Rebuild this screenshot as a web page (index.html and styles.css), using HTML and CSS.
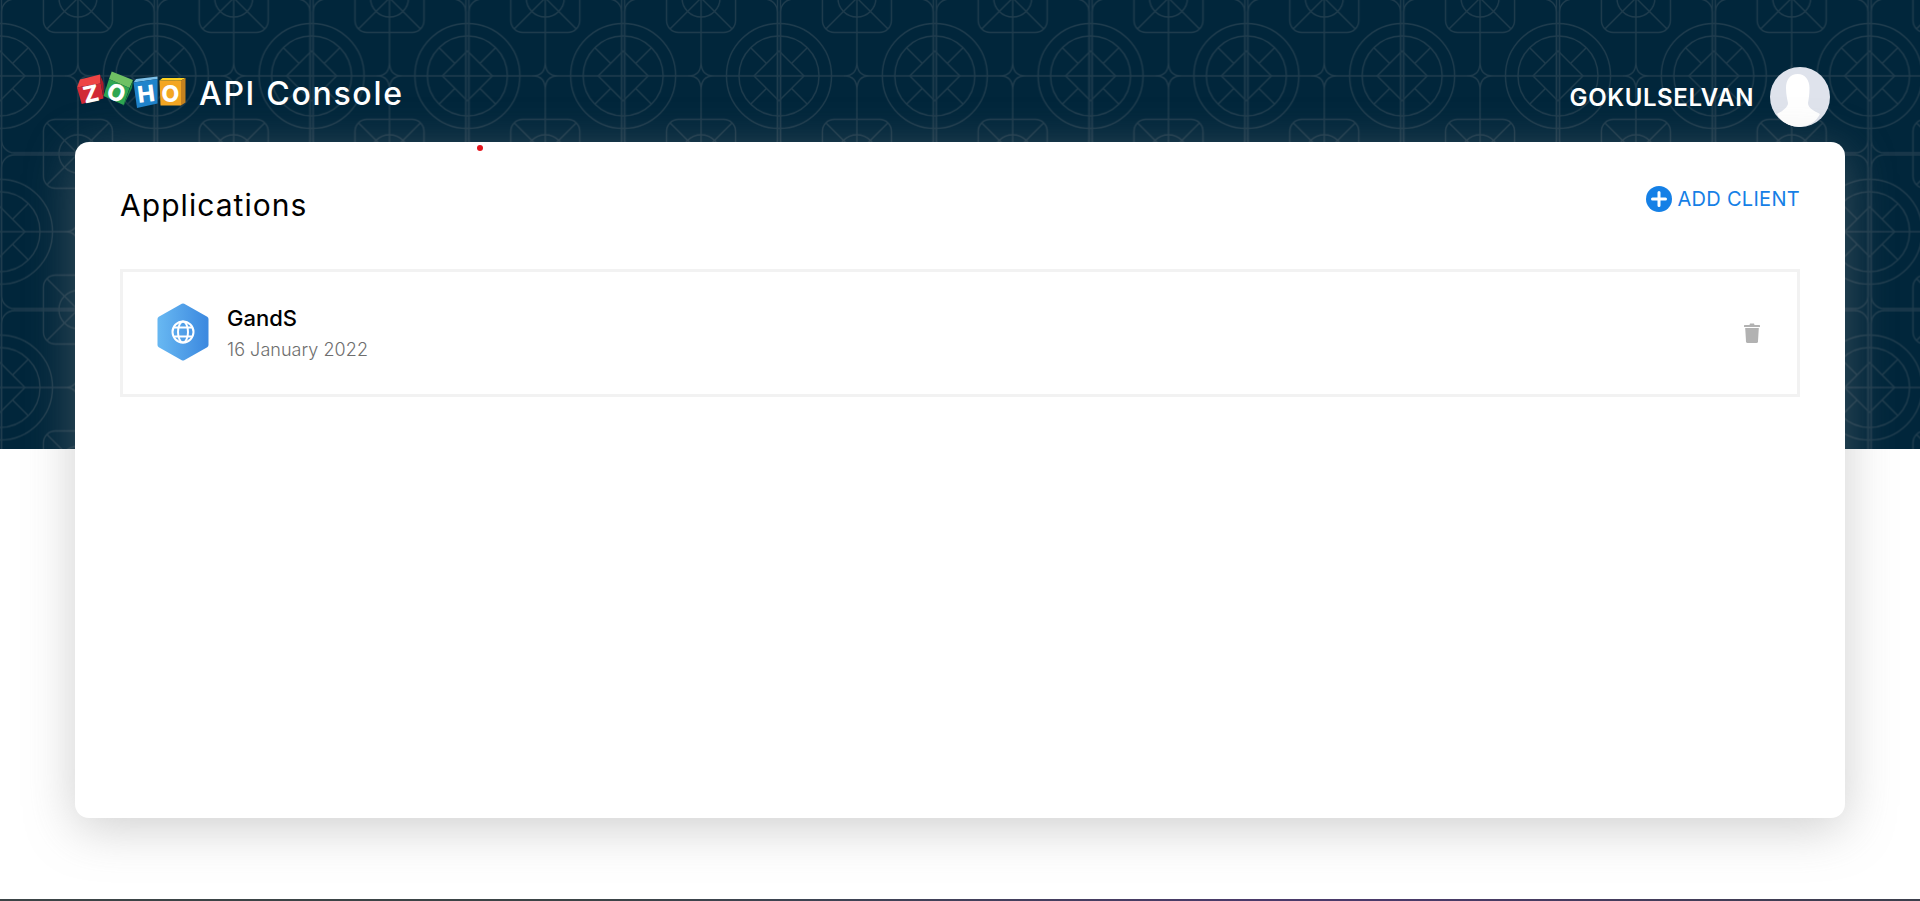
FILE: index.html
```html
<!DOCTYPE html>
<html lang="en">

<head>
    <meta charset="UTF-8">
    <meta name="viewport" content="width=device-width, initial-scale=1.0">
    <title>API Console</title>
    <link rel="stylesheet" href="styles.css">
</head>

<body>
    <div class="page">
        <!-- patterned band behind header and card -->
        <svg class="band" width="1920" height="449" aria-hidden="true">
            <defs>
                <g id="rosette">
                    <circle r="52.5" />
                    <circle r="40" />
                    <path d="M-25 0L0 -25L25 0L0 25Z" />
                    <path d="M28 -28L12.5 -12.5M-28 -28L-12.5 -12.5M28 28L12.5 12.5M-28 28L-12.5 12.5" />
                    <path d="M-1.5 -78V78M1.5 -78V78" />
                </g>
                <g id="envelope">
                    <rect x="-34.5" y="-34.5" width="69" height="69" rx="12" />
                    <circle r="19" />
                    <path d="M-31 -31L31 31M31 -31L-31 31" />
                </g>
                <pattern id="tile" width="155.8" height="155.8" patternUnits="userSpaceOnUse"
                    patternTransform="translate(0 -2)">
                    <g fill="none" stroke="#1f3c4d" stroke-width="1.4">
                        <rect x="1.5" y="1" width="152.8" height="153.8" rx="13" />
                        <path d="M0 77.9H66M90 77.9H155.8M77.9 0V64M77.9 92V155.8" />
                        <path d="M77.9 64Q77.9 77.9 65.5 77.9Q77.9 77.9 77.9 92Q77.9 77.9 90.3 77.9Q77.9 77.9 77.9 64Z" />
                        <use href="#rosette" x="0" y="77.9" />
                        <use href="#rosette" x="155.8" y="77.9" />
                        <use href="#envelope" x="77.9" y="0" />
                        <use href="#envelope" x="77.9" y="155.8" />
                    </g>
                </pattern>
            </defs>
            <rect width="1920" height="449" fill="url(#tile)" />
        </svg>

        <header class="topbar">
            <div class="brand">
                <svg class="logo" viewBox="77 71 112 38" width="112" height="38" aria-hidden="true">
                    <path fill="#ee4444" d="M77 87.5L80 79.5L100 74.5L100.7 83.5Z" />
                    <path fill="#a81c2a" d="M100 74.5L103.5 83L104 98.5L100.7 83.5Z" />
                    <path fill="#d12a36" d="M77 87.5L100.7 83.5L103.5 98.5L81.7 104Z" />
                    <path fill="#6fc163" d="M109 79L111.7 71.5L133 80L129.5 88Z" />
                    <path fill="#1f8a44" d="M133 80L132 88L123.5 106L123.5 105Z" />
                    <path fill="#2ea652" d="M109 79L129.5 88L123.5 105L103.5 96Z" />
                    <path fill="#7cc1ea" d="M133.5 82.5L136 79L157.5 76.5L157.5 79Z" />
                    <path fill="#1f83cb" d="M133.5 82.5L157.5 79L157.5 103.5L137 108Z" />
                    <path fill="#ffd21f" d="M159.5 80.5L162.5 78L185.5 78L181 80.5Z" />
                    <path fill="#c5821f" d="M181 80.5L185.5 78L185.5 102.5L181 105.5Z" />
                    <path fill="#f3a623" d="M159.5 80.5L181 80.5L181 105.5L160.5 105.5Z" />
                    <text class="logo-letter" x="91" y="102" text-anchor="middle" transform="rotate(-12 91 94)">Z</text>
                    <text class="logo-letter" x="116.5" y="101" text-anchor="middle" transform="rotate(22 116.5 92)">O</text>
                    <text class="logo-letter" x="146" y="102" text-anchor="middle" transform="rotate(-7 146 93)">H</text>
                    <text class="logo-letter" x="170.5" y="102" text-anchor="middle">O</text>
                </svg>
                <span class="brand-name">API Console</span>
            </div>
            <div class="user">
                <span class="user-name">GOKULSELVAN</span>
                <svg class="avatar" viewBox="0 0 60 60" width="60" height="60" aria-hidden="true">
                    <rect width="60" height="60" fill="#dfe3ec" />
                    <path fill="#fff" d="M27.7 7C20 7 16 13 16 21C16 28 17.5 33 18 36C18 40 13 44 7 47C11 55 19 60 28 60C38 60 46 55 50 47C44 44 38 41 38 36C38.500 33 39.500 28 39.500 21C39.500 13 35 7 27.700 7Z" />
                </svg>
            </div>
        </header>

        <main class="card">
            <span class="red-dot"></span>
            <div class="card-head">
                <h1>Applications</h1>
                <a class="add-client" href="#">
                    <svg viewBox="0 0 26 26" width="26" height="26" aria-hidden="true">
                        <circle cx="13" cy="13" r="13" fill="#1580e6" />
                        <path d="M13 6.500V19.500M6.500 13H19.500" stroke="#fff" stroke-width="3" stroke-linecap="round" />
                    </svg>
                    ADD CLIENT
                </a>
            </div>

            <div class="client">
                <svg class="client-icon" viewBox="0 0 52 58" width="52" height="58" aria-hidden="true">
                    <defs>
                        <linearGradient id="hex" x1="0" y1="0" x2="1" y2="0">
                            <stop offset="0" stop-color="#66b6f1" />
                            <stop offset="1" stop-color="#3d8ae0" />
                        </linearGradient>
                    </defs>
                    <path fill="url(#hex)" stroke="url(#hex)" stroke-width="5" stroke-linejoin="round"
                        d="M26 3L49 16V42L26 55L3 42V16Z" />
                    <g fill="none" stroke="#fff" stroke-width="2">
                        <circle cx="26" cy="29" r="10.500" />
                        <ellipse cx="26" cy="29" rx="5" ry="10.500" />
                        <path d="M17 24.500H35M17 33.500H35" />
                    </g>
                </svg>
                <div class="client-text">
                    <div class="client-name">GandS</div>
                    <div class="client-date">16 January 2022</div>
                </div>
                <svg class="trash" viewBox="0 0 16 20" width="16" height="20" aria-hidden="true">
                    <path fill="#b2b2b2" d="M6 0.500H10L10.500 2H15.500Q16 2 16 3V4H0V3Q0 2 0.500 2H5.500Z" />
                    <path fill="#b2b2b2" d="M1.200 5H14.800L14 18.500Q13.900 20 12.500 20H3.500Q2.100 20 2 18.500Z" />
                </svg>
            </div>
        </main>

        <div class="bottom-line"></div>
    </div>
</body>

</html>
```

FILE: styles.css
```css
* {
    margin: 0;
    padding: 0;
    box-sizing: border-box;
}

body {
    font-family: Inter, "Liberation Sans", sans-serif;
    background-color: #fff;
    overflow: hidden;
}

.page {
    position: relative;
    display: flex;
    flex-direction: column;
    height: 901px;
}

.band {
    position: absolute;
    top: 0;
    left: 0;
    background-color: #01263b;
}

.topbar {
    position: relative;
    display: flex;
    justify-content: space-between;
    align-items: flex-start;
    height: 142px;
    padding: 67px 90px 0 77px;
    color: #fff;
}

.brand {
    display: flex;
    align-items: flex-start;
    gap: 10px;
    margin-top: 4px;
}

.logo-letter {
    font-family: Inter, sans-serif;
    font-size: 23px;
    font-weight: 800;
    fill: #fff;
}

.brand-name {
    font-size: 32px;
    font-weight: 500;
    line-height: 38px;
    letter-spacing: 1.7px;
    margin-top: 4px;
}

.user {
    display: flex;
    align-items: center;
    gap: 16px;
}

.user-name {
    font-size: 24px;
    font-weight: 600;
    letter-spacing: 0.6px;
}

.avatar {
    border-radius: 50%;
    display: block;
}

.card {
    position: relative;
    height: 676px;
    margin: 0 75px;
    padding: 45px;
    background-color: #fff;
    border-radius: 14px;
    box-shadow: 0 10px 50px rgba(140, 140, 140, 0.42);
}

.red-dot {
    position: absolute;
    top: 3px;
    left: 402px;
    width: 6px;
    height: 6px;
    border-radius: 50%;
    background-color: #e4141c;
}

.card-head {
    display: flex;
    justify-content: space-between;
    align-items: flex-start;
    margin-bottom: 45px;
}

.card-head h1 {
    font-size: 30px;
    font-weight: 400;
    line-height: 37px;
    letter-spacing: 1.05px;
    color: #000;
}

.add-client {
    display: flex;
    align-items: center;
    gap: 5px;
    margin-top: -1px;
    font-size: 20px;
    font-weight: 400;
    letter-spacing: 0.3px;
    color: #1580e6;
    text-decoration: none;
}

.client {
    display: flex;
    align-items: center;
    height: 128px;
    padding: 0 37px 0 34px;
    border: 3px solid #f2f2f2;
}

.client-icon {
    margin-top: -3px;
}

.client-text {
    flex: 1;
    margin-left: 18px;
    margin-top: 2px;
}

.client-name {
    font-size: 22px;
    font-weight: 500;
    line-height: 30px;
    color: #000;
}

.client-date {
    margin-top: 2px;
    font-size: 18px;
    font-weight: 300;
    line-height: 30px;
    letter-spacing: 0.05px;
    color: #6e6e6e;
}

.bottom-line {
    position: absolute;
    left: 0;
    right: 0;
    bottom: 0;
    height: 2px;
    background: linear-gradient(to right, #3b4446 0%, #3b4446 30%, #3d4452 42%, #4a3a6a 65%, #4a3a6a 72%, #3c3f4c 100%);
}
```
